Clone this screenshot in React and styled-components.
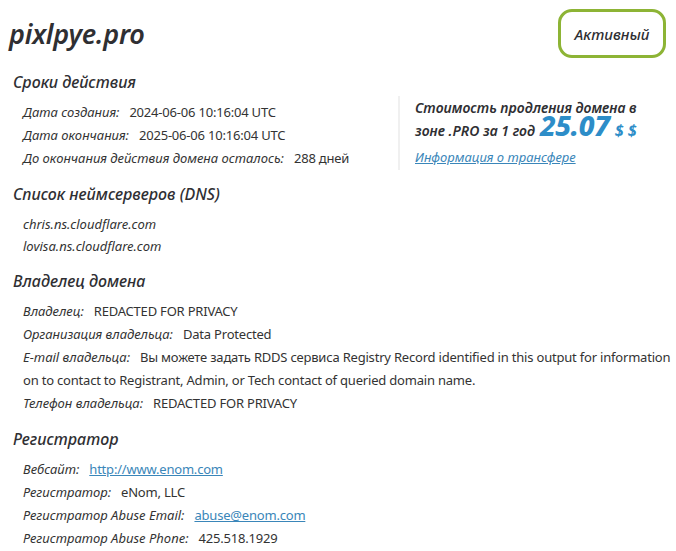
import React from "react";
import styled, { createGlobalStyle } from "styled-components";

const Global = createGlobalStyle`
  html, body { margin: 0; padding: 0; background: #fff; }
  body { font-family: "Noto Sans", "Open Sans", sans-serif; color: #333; }
`;

const Page = styled.div`
  width: 676px;
  padding: 9px 2px 0 9px;
  box-sizing: border-box;
`;

const Header = styled.header`
  display: flex;
  justify-content: space-between;
  align-items: center;
  height: 49px;
  margin-right: 8px;
`;

const Title = styled.h1`
  margin: 0;
  font-size: 27px;
  font-style: italic;
  font-weight: 600;
  color: #2f2f33;
  letter-spacing: -0.2px;
`;

const Badge = styled.div`
  box-sizing: border-box;
  width: 108px;
  height: 49px;
  border: 3px solid #8db435;
  border-radius: 14px;
  display: flex;
  align-items: center;
  justify-content: center;
  font-size: 15px;
  font-style: italic;
  font-weight: 500;
  color: #2f2f33;
`;

const Split = styled.div`
  display: flex;
  align-items: flex-start;
`;

const Section = styled.section`
  flex: ${(p) => (p.$grow ? 1 : "none")};
  padding-left: 4px;
`;

const Heading = styled.h2`
  margin: 12px 0 7px;
  font-size: 16px;
  line-height: 24px;
  font-style: italic;
  font-weight: 500;
  color: #2f2f33;
`;

const Rows = styled.div`
  padding-left: 10px;
`;

const Row = styled.div`
  font-size: 13px;
  line-height: 23px;
  color: #333;
`;

const Label = styled.span`
  font-style: italic;
  margin-right: 10px;
`;

const Plain = styled.span`
  letter-spacing: -0.2px;
`;

const Mono = styled.div`
  font-size: 13px;
  line-height: 22px;
  font-style: italic;
`;

const Link = styled.a`
  color: #3a86b9;
  text-decoration: underline;
  font-style: ${(p) => (p.$italic ? "italic" : "normal")};
  letter-spacing: ${(p) => (p.$italic ? "0" : "-0.2px")};
`;

const PricePanel = styled.aside`
  margin-top: 38px;
  width: 245px;
  border-left: 2px solid #f0f0f0;
  padding-left: 15px;
  margin-right: 14px;
`;

const PriceLine = styled.div`
  font-size: 14px;
  font-style: italic;
  font-weight: 600;
  line-height: 23px;
  white-space: nowrap;
  color: #2f2f33;
`;

const Price = styled.span`
  font-size: 28px;
  line-height: 0;
  font-weight: 800;
  font-style: italic;
  color: #2d8dc8;
  margin: 0 5px 0 5px;
  letter-spacing: -0.3px;
`;

const Currency = styled.span`
  font-size: 16px;
  line-height: 0;
  font-weight: 700;
  color: #2d8dc8;
`;

const PriceLink = styled(Link)`
  display: block;
  font-size: 13px;
  line-height: 26px;
  margin-top: 2px;
`;

export default function App() {
  return (
    <>
      <Global />
      <Page>
        <Header>
          <Title>pixlpye.pro</Title>
          <Badge>Активный</Badge>
        </Header>

        <Split>
          <Section $grow>
            <Heading>Сроки действия</Heading>
            <Rows>
              <Row><Label>Дата создания:</Label><Plain>2024-06-06 10:16:04 UTC</Plain></Row>
              <Row><Label>Дата окончания:</Label><Plain>2025-06-06 10:16:04 UTC</Plain></Row>
              <Row><Label>До окончания действия домена осталось:</Label><Plain>288 дней</Plain></Row>
            </Rows>
          </Section>
          <PricePanel>
            <PriceLine>Стоимость продления домена в</PriceLine>
            <PriceLine>зоне .PRO за 1 год<Price>25.07</Price><Currency>$ $</Currency></PriceLine>
            <PriceLink href="#" $italic>Информация о трансфере</PriceLink>
          </PricePanel>
        </Split>

        <Section>
          <Heading>Список неймсерверов (DNS)</Heading>
          <Rows>
            <Mono>chris.ns.cloudflare.com</Mono>
            <Mono>lovisa.ns.cloudflare.com</Mono>
          </Rows>
        </Section>

        <Section>
          <Heading>Владелец домена</Heading>
          <Rows>
            <Row><Label>Владелец:</Label><Plain>REDACTED FOR PRIVACY</Plain></Row>
            <Row><Label>Организация владельца:</Label><Plain>Data Protected</Plain></Row>
            <Row><Label>E-mail владельца:</Label><Plain>Вы можете задать RDDS сервиса Registry Record identified in this output for information on to contact to Registrant, Admin, or Tech contact of queried domain name.</Plain></Row>
            <Row><Label>Телефон владельца:</Label><Plain>REDACTED FOR PRIVACY</Plain></Row>
          </Rows>
        </Section>

        <Section>
          <Heading>Регистратор</Heading>
          <Rows>
            <Row><Label>Вебсайт:</Label><Link href="#">http://www.enom.com</Link></Row>
            <Row><Label>Регистратор:</Label><Plain>eNom, LLC</Plain></Row>
            <Row><Label>Регистратор Abuse Email:</Label><Link href="#">abuse@enom.com</Link></Row>
            <Row><Label>Регистратор Abuse Phone:</Label><Plain>425.518.1929</Plain></Row>
          </Rows>
        </Section>
      </Page>
    </>
  );
}
